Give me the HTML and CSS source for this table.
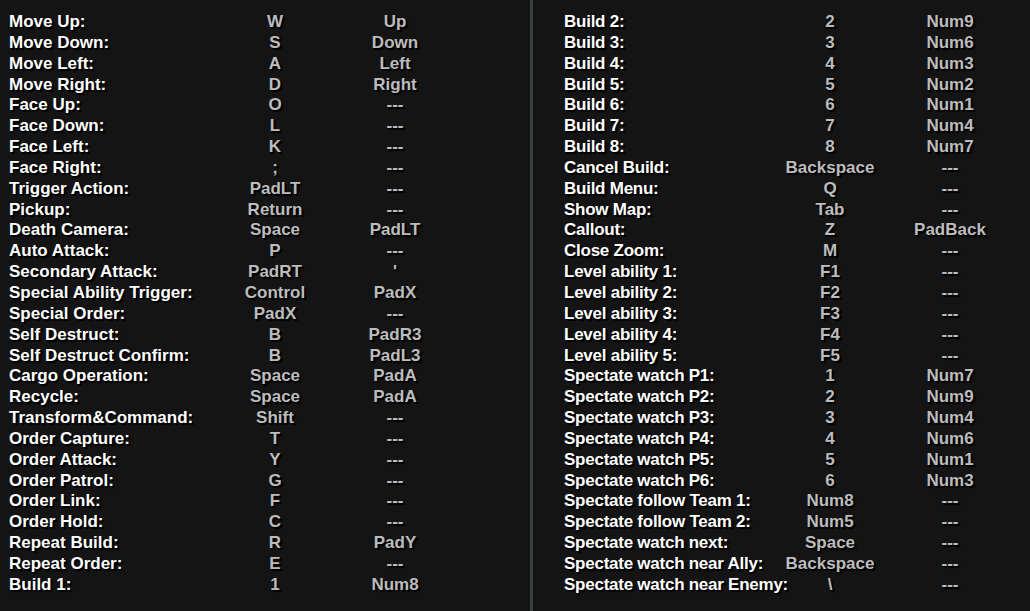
FILE: index.html
```html
<!DOCTYPE html>
<html>
<head>
<meta charset="utf-8">
<link rel="stylesheet" href="styles.css">
</head>
<body>
<div class="screen">
  <div class="panel left">
    <div class="row"><span class="lbl">Move Up:</span><span class="key">W</span><span class="alt">Up</span></div>
    <div class="row"><span class="lbl">Move Down:</span><span class="key">S</span><span class="alt">Down</span></div>
    <div class="row"><span class="lbl">Move Left:</span><span class="key">A</span><span class="alt">Left</span></div>
    <div class="row"><span class="lbl">Move Right:</span><span class="key">D</span><span class="alt">Right</span></div>
    <div class="row"><span class="lbl">Face Up:</span><span class="key">O</span><span class="alt">---</span></div>
    <div class="row"><span class="lbl">Face Down:</span><span class="key">L</span><span class="alt">---</span></div>
    <div class="row"><span class="lbl">Face Left:</span><span class="key">K</span><span class="alt">---</span></div>
    <div class="row"><span class="lbl">Face Right:</span><span class="key">;</span><span class="alt">---</span></div>
    <div class="row"><span class="lbl">Trigger Action:</span><span class="key">PadLT</span><span class="alt">---</span></div>
    <div class="row"><span class="lbl">Pickup:</span><span class="key">Return</span><span class="alt">---</span></div>
    <div class="row"><span class="lbl">Death Camera:</span><span class="key">Space</span><span class="alt">PadLT</span></div>
    <div class="row"><span class="lbl">Auto Attack:</span><span class="key">P</span><span class="alt">---</span></div>
    <div class="row"><span class="lbl">Secondary Attack:</span><span class="key">PadRT</span><span class="alt">'</span></div>
    <div class="row"><span class="lbl">Special Ability Trigger:</span><span class="key">Control</span><span class="alt">PadX</span></div>
    <div class="row"><span class="lbl">Special Order:</span><span class="key">PadX</span><span class="alt">---</span></div>
    <div class="row"><span class="lbl">Self Destruct:</span><span class="key">B</span><span class="alt">PadR3</span></div>
    <div class="row"><span class="lbl">Self Destruct Confirm:</span><span class="key">B</span><span class="alt">PadL3</span></div>
    <div class="row"><span class="lbl">Cargo Operation:</span><span class="key">Space</span><span class="alt">PadA</span></div>
    <div class="row"><span class="lbl">Recycle:</span><span class="key">Space</span><span class="alt">PadA</span></div>
    <div class="row"><span class="lbl">Transform&amp;Command:</span><span class="key">Shift</span><span class="alt">---</span></div>
    <div class="row"><span class="lbl">Order Capture:</span><span class="key">T</span><span class="alt">---</span></div>
    <div class="row"><span class="lbl">Order Attack:</span><span class="key">Y</span><span class="alt">---</span></div>
    <div class="row"><span class="lbl">Order Patrol:</span><span class="key">G</span><span class="alt">---</span></div>
    <div class="row"><span class="lbl">Order Link:</span><span class="key">F</span><span class="alt">---</span></div>
    <div class="row"><span class="lbl">Order Hold:</span><span class="key">C</span><span class="alt">---</span></div>
    <div class="row"><span class="lbl">Repeat Build:</span><span class="key">R</span><span class="alt">PadY</span></div>
    <div class="row"><span class="lbl">Repeat Order:</span><span class="key">E</span><span class="alt">---</span></div>
    <div class="row"><span class="lbl">Build 1:</span><span class="key">1</span><span class="alt">Num8</span></div>
  </div>
  <div class="divider"></div>
  <div class="panel right">
    <div class="row"><span class="lbl">Build 2:</span><span class="key">2</span><span class="alt">Num9</span></div>
    <div class="row"><span class="lbl">Build 3:</span><span class="key">3</span><span class="alt">Num6</span></div>
    <div class="row"><span class="lbl">Build 4:</span><span class="key">4</span><span class="alt">Num3</span></div>
    <div class="row"><span class="lbl">Build 5:</span><span class="key">5</span><span class="alt">Num2</span></div>
    <div class="row"><span class="lbl">Build 6:</span><span class="key">6</span><span class="alt">Num1</span></div>
    <div class="row"><span class="lbl">Build 7:</span><span class="key">7</span><span class="alt">Num4</span></div>
    <div class="row"><span class="lbl">Build 8:</span><span class="key">8</span><span class="alt">Num7</span></div>
    <div class="row"><span class="lbl">Cancel Build:</span><span class="key">Backspace</span><span class="alt">---</span></div>
    <div class="row"><span class="lbl">Build Menu:</span><span class="key">Q</span><span class="alt">---</span></div>
    <div class="row"><span class="lbl">Show Map:</span><span class="key">Tab</span><span class="alt">---</span></div>
    <div class="row"><span class="lbl">Callout:</span><span class="key">Z</span><span class="alt">PadBack</span></div>
    <div class="row"><span class="lbl">Close Zoom:</span><span class="key">M</span><span class="alt">---</span></div>
    <div class="row"><span class="lbl">Level ability 1:</span><span class="key">F1</span><span class="alt">---</span></div>
    <div class="row"><span class="lbl">Level ability 2:</span><span class="key">F2</span><span class="alt">---</span></div>
    <div class="row"><span class="lbl">Level ability 3:</span><span class="key">F3</span><span class="alt">---</span></div>
    <div class="row"><span class="lbl">Level ability 4:</span><span class="key">F4</span><span class="alt">---</span></div>
    <div class="row"><span class="lbl">Level ability 5:</span><span class="key">F5</span><span class="alt">---</span></div>
    <div class="row"><span class="lbl">Spectate watch P1:</span><span class="key">1</span><span class="alt">Num7</span></div>
    <div class="row"><span class="lbl">Spectate watch P2:</span><span class="key">2</span><span class="alt">Num9</span></div>
    <div class="row"><span class="lbl">Spectate watch P3:</span><span class="key">3</span><span class="alt">Num4</span></div>
    <div class="row"><span class="lbl">Spectate watch P4:</span><span class="key">4</span><span class="alt">Num6</span></div>
    <div class="row"><span class="lbl">Spectate watch P5:</span><span class="key">5</span><span class="alt">Num1</span></div>
    <div class="row"><span class="lbl">Spectate watch P6:</span><span class="key">6</span><span class="alt">Num3</span></div>
    <div class="row"><span class="lbl">Spectate follow Team 1:</span><span class="key">Num8</span><span class="alt">---</span></div>
    <div class="row"><span class="lbl">Spectate follow Team 2:</span><span class="key">Num5</span><span class="alt">---</span></div>
    <div class="row"><span class="lbl">Spectate watch next:</span><span class="key">Space</span><span class="alt">---</span></div>
    <div class="row"><span class="lbl">Spectate watch near Ally:</span><span class="key">Backspace</span><span class="alt">---</span></div>
    <div class="row"><span class="lbl">Spectate watch near Enemy:</span><span class="key">\</span><span class="alt">---</span></div>
  </div>
</div>
</body>
</html>
```

FILE: styles.css
```css
html, body {
  margin: 0;
  padding: 0;
  background: #141414;
}
.screen {
  width: 1030px;
  height: 611px;
  display: flex;
  background: #141414;
  overflow: hidden;
  font-family: "Liberation Sans", Arial, sans-serif;
  font-weight: bold;
  font-size: 17px;
}
.panel {
  padding-top: 12px;
  display: flex;
  flex-direction: column;
}
.panel.left {
  width: 521px;
  padding-left: 9px;
}
.panel.right {
  flex: 1;
  padding-left: 31px;
}
.divider {
  width: 3px;
  background: #3b4141;
}
.row {
  display: grid;
  grid-template-columns: 206px 120px 120px;
  height: 20.85px;
  line-height: 20.85px;
  white-space: nowrap;
  text-shadow: 1px 1px 0 #000, 2px 2px 1px #000;
}
.lbl {
  color: #ffffff;
}
.right .lbl {
  letter-spacing: -0.25px;
}
.key, .alt {
  color: #bcbcbc;
  text-align: center;
}
```
